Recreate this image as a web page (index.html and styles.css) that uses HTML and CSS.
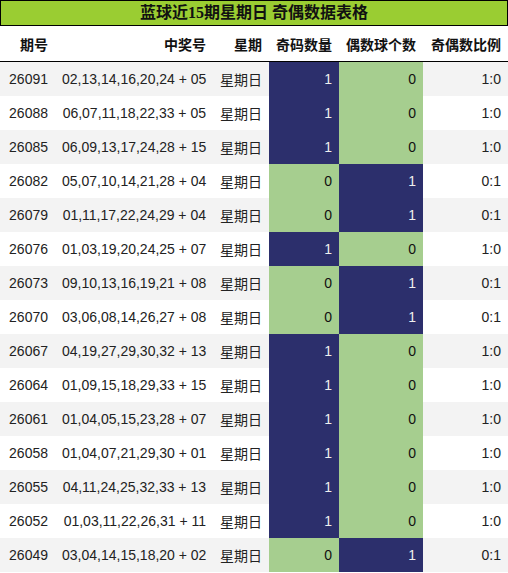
FILE: index.html
```html
<!DOCTYPE html>
<html lang="zh">
<head>
<meta charset="utf-8">
<link rel="stylesheet" href="styles.css">
</head>
<body>
<div class="title">蓝球近15期星期日 奇偶数据表格</div>
<table class="grid">
<colgroup>
<col class="c1"><col class="c2"><col class="c3"><col class="c4"><col class="c5"><col class="c6">
</colgroup>
<thead>
<tr><th>期号</th><th>中奖号</th><th>星期</th><th>奇码数量</th><th>偶数球个数</th><th>奇偶数比例</th></tr>
</thead>
<tbody>
<tr><td>26091</td><td>02,13,14,16,20,24 + 05</td><td>星期日</td><td class="navy">1</td><td class="green">0</td><td>1:0</td></tr>
<tr><td>26088</td><td>06,07,11,18,22,33 + 05</td><td>星期日</td><td class="navy">1</td><td class="green">0</td><td>1:0</td></tr>
<tr><td>26085</td><td>06,09,13,17,24,28 + 15</td><td>星期日</td><td class="navy">1</td><td class="green">0</td><td>1:0</td></tr>
<tr><td>26082</td><td>05,07,10,14,21,28 + 04</td><td>星期日</td><td class="green">0</td><td class="navy">1</td><td>0:1</td></tr>
<tr><td>26079</td><td>01,11,17,22,24,29 + 04</td><td>星期日</td><td class="green">0</td><td class="navy">1</td><td>0:1</td></tr>
<tr><td>26076</td><td>01,03,19,20,24,25 + 07</td><td>星期日</td><td class="navy">1</td><td class="green">0</td><td>1:0</td></tr>
<tr><td>26073</td><td>09,10,13,16,19,21 + 08</td><td>星期日</td><td class="green">0</td><td class="navy">1</td><td>0:1</td></tr>
<tr><td>26070</td><td>03,06,08,14,26,27 + 08</td><td>星期日</td><td class="green">0</td><td class="navy">1</td><td>0:1</td></tr>
<tr><td>26067</td><td>04,19,27,29,30,32 + 13</td><td>星期日</td><td class="navy">1</td><td class="green">0</td><td>1:0</td></tr>
<tr><td>26064</td><td>01,09,15,18,29,33 + 15</td><td>星期日</td><td class="navy">1</td><td class="green">0</td><td>1:0</td></tr>
<tr><td>26061</td><td>01,04,05,15,23,28 + 07</td><td>星期日</td><td class="navy">1</td><td class="green">0</td><td>1:0</td></tr>
<tr><td>26058</td><td>01,04,07,21,29,30 + 01</td><td>星期日</td><td class="navy">1</td><td class="green">0</td><td>1:0</td></tr>
<tr><td>26055</td><td>04,11,24,25,32,33 + 13</td><td>星期日</td><td class="navy">1</td><td class="green">0</td><td>1:0</td></tr>
<tr><td>26052</td><td>01,03,11,22,26,31 + 11</td><td>星期日</td><td class="navy">1</td><td class="green">0</td><td>1:0</td></tr>
<tr><td>26049</td><td>03,04,14,15,18,20 + 02</td><td>星期日</td><td class="green">0</td><td class="navy">1</td><td>0:1</td></tr>
</tbody>
</table>
</body>
</html>
```
FILE: styles.css
```css
html, body {
  margin: 0;
  padding: 0;
  background: #ffffff;
}
body {
  width: 508px;
  font-family: "Liberation Sans", "Noto Sans CJK SC", sans-serif;
  font-size: 14px;
  color: #222222;
}
.title {
  height: 24px;
  line-height: 24px;
  border: 1px solid #000000;
  background: #9acd32;
  text-align: center;
  font-family: "Liberation Serif", "Noto Sans CJK SC", serif;
  font-size: 16px;
  font-weight: bold;
  color: #111111;
}
.grid {
  width: 508px;
  border-collapse: collapse;
  table-layout: fixed;
}
.c1 { width: 55px; }
.c2 { width: 158px; }
.c3 { width: 56px; }
.c4 { width: 70px; }
.c5 { width: 84px; }
.c6 { width: 85px; }
.grid th {
  height: 35px;
  padding: 0 7px;
  text-align: right;
  font-weight: bold;
  color: #111111;
  border-bottom: 1px solid #000000;
  white-space: nowrap;
}
.grid td {
  height: 34px;
  padding: 0 7px;
  text-align: right;
  white-space: nowrap;
}
.grid tbody tr:nth-child(odd) {
  background: #f3f3f3;
}
.grid tbody tr:nth-child(even) {
  background: #ffffff;
}
.grid td.navy {
  background: #2c2f6c;
  color: #eeeeee;
}
.grid td.green {
  background: #a6ce8f;
  color: #111111;
}
```
